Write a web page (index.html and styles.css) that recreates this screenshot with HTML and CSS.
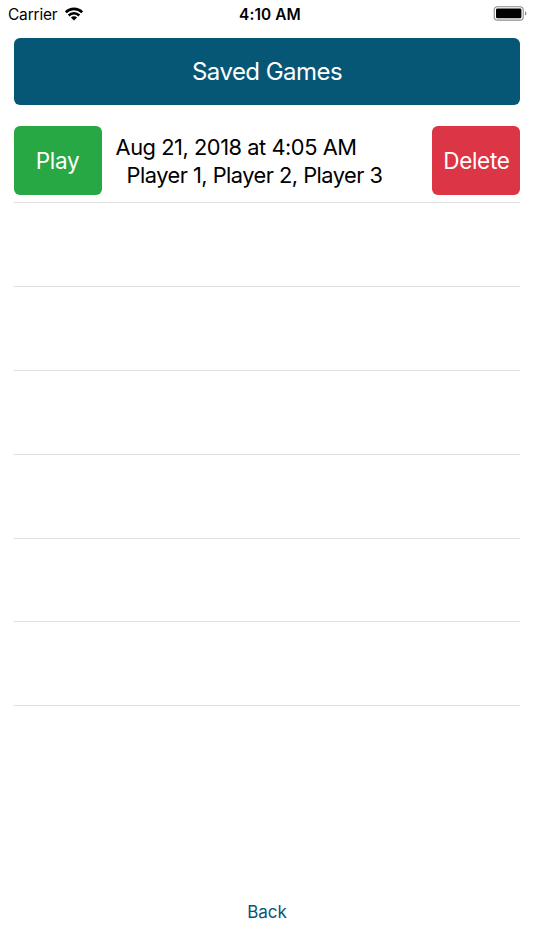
FILE: index.html
```html
<!DOCTYPE html>
<html lang="en">
<head>
    <meta charset="UTF-8">
    <meta name="viewport" content="width=device-width, initial-scale=1.0">
    <title>Saved Games</title>
    <link rel="stylesheet" href="styles.css">
</head>
<body>
    <div class="status-bar">
        <div class="status-left">
            <span class="carrier">Carrier</span>
            <svg class="wifi" width="18" height="14" viewBox="0 0 18 14">
                <g fill="none" stroke="#000" stroke-width="2.6">
                    <path d="M0.8 5.2A11.7 11.7 0 0 1 17.2 5.2"/>
                    <path d="M3.7 8.5A7.5 7.5 0 0 1 14.3 8.5"/>
                </g>
                <path d="M5.9 10.5A4.3 4.3 0 0 1 12.1 10.5L9 13.6Z"/>
            </svg>
        </div>
        <span class="time">4:10 AM</span>
        <div class="status-right">
            <svg class="battery" width="34" height="15" viewBox="0 0 34 15">
                <rect x="1.2" y="0.7" width="29" height="13.4" rx="3.2" fill="none" stroke="#8a8a8a" stroke-width="1.1"/>
                <rect x="3" y="2.5" width="25.4" height="9.8" rx="1.4"/>
                <path d="M32 5.2Q33.4 5.8 33.4 7.4T32 9.6Z" fill="#8a8a8a"/>
            </svg>
        </div>
    </div>
    <main class="content">
        <h1 class="title"><span>Saved Games</span></h1>
        <ul class="games-list">
            <li class="game">
                <button class="btn play-btn"><span>Play</span></button>
                <div class="game-info">
                    <p class="date">Aug 21, 2018 at 4:05 AM</p>
                    <p class="players">Player 1, Player 2, Player 3</p>
                </div>
                <button class="btn delete-btn"><span>Delete</span></button>
            </li>
            <li class="game"></li>
            <li class="game"></li>
            <li class="game"></li>
            <li class="game"></li>
            <li class="game"></li>
            <li class="game"></li>
        </ul>
    </main>
    <footer class="footer">
        <button class="back-btn">Back</button>
    </footer>
</body>
</html>
```

FILE: styles.css
```css
* {
    margin: 0;
    padding: 0;
    box-sizing: border-box;
}

body {
    font-family: Inter, "Liberation Sans", sans-serif;
    background: #fff;
    color: #000;
    height: 100vh;
    display: flex;
    flex-direction: column;
    overflow: hidden;
}

button {
    border: none;
    font-family: inherit;
    cursor: pointer;
}

.status-bar {
    height: 28px;
    padding: 0 7px 0 8px;
    display: grid;
    grid-template-columns: 1fr auto 1fr;
    align-items: center;
    font-size: 15.5px;
    line-height: 28px;
}

.status-left {
    display: flex;
    align-items: center;
    gap: 8px;
}

.carrier {
    padding-top: 1px;
    letter-spacing: -0.2px;
}

.wifi {
    margin-top: -2px;
}

.time {
    padding: 1px 0 0 5px;
    font-size: 15.4px;
    font-weight: 600;
    letter-spacing: 0.1px;
}

.status-right {
    display: flex;
    justify-content: flex-end;
}

.battery {
    margin-top: -2px;
}

.content {
    flex: 1;
    padding: 10px 13.6px 0;
}

.title {
    height: 67px;
    background: #065675;
    color: #fff;
    border-radius: 6px;
    font-size: 24px;
    font-weight: 400;
    letter-spacing: -0.55px;
    line-height: 67px;
    text-align: center;
}

.games-list {
    list-style: none;
    margin-top: 14px;
}

.game {
    height: 83.92px;
    padding: 7px 0 6px;
    border-bottom: 1px solid #e0e0e0;
    display: flex;
}

.btn {
    width: 88px;
    height: 69.4px;
    flex: none;
    color: #fff;
    border-radius: 6px;
    font-size: 22.5px;
    font-weight: 400;
    letter-spacing: -0.3px;
}

.play-btn {
    background: #28a745;
}

.delete-btn {
    background: #dc3545;
}

.game-info {
    flex: 1;
    padding: 7px 0 0 14px;
    font-size: 21.8px;
    letter-spacing: -0.45px;
    line-height: 28px;
    white-space: nowrap;
}

.players {
    padding-left: 11px;
    letter-spacing: -0.52px;
}

.footer {
    height: 76px;
    text-align: center;
}

.back-btn {
    background: none;
    color: #065675;
    padding: 10px 20px;
    margin-top: 17px;
    font-size: 17px;
    line-height: 22px;
}
```
